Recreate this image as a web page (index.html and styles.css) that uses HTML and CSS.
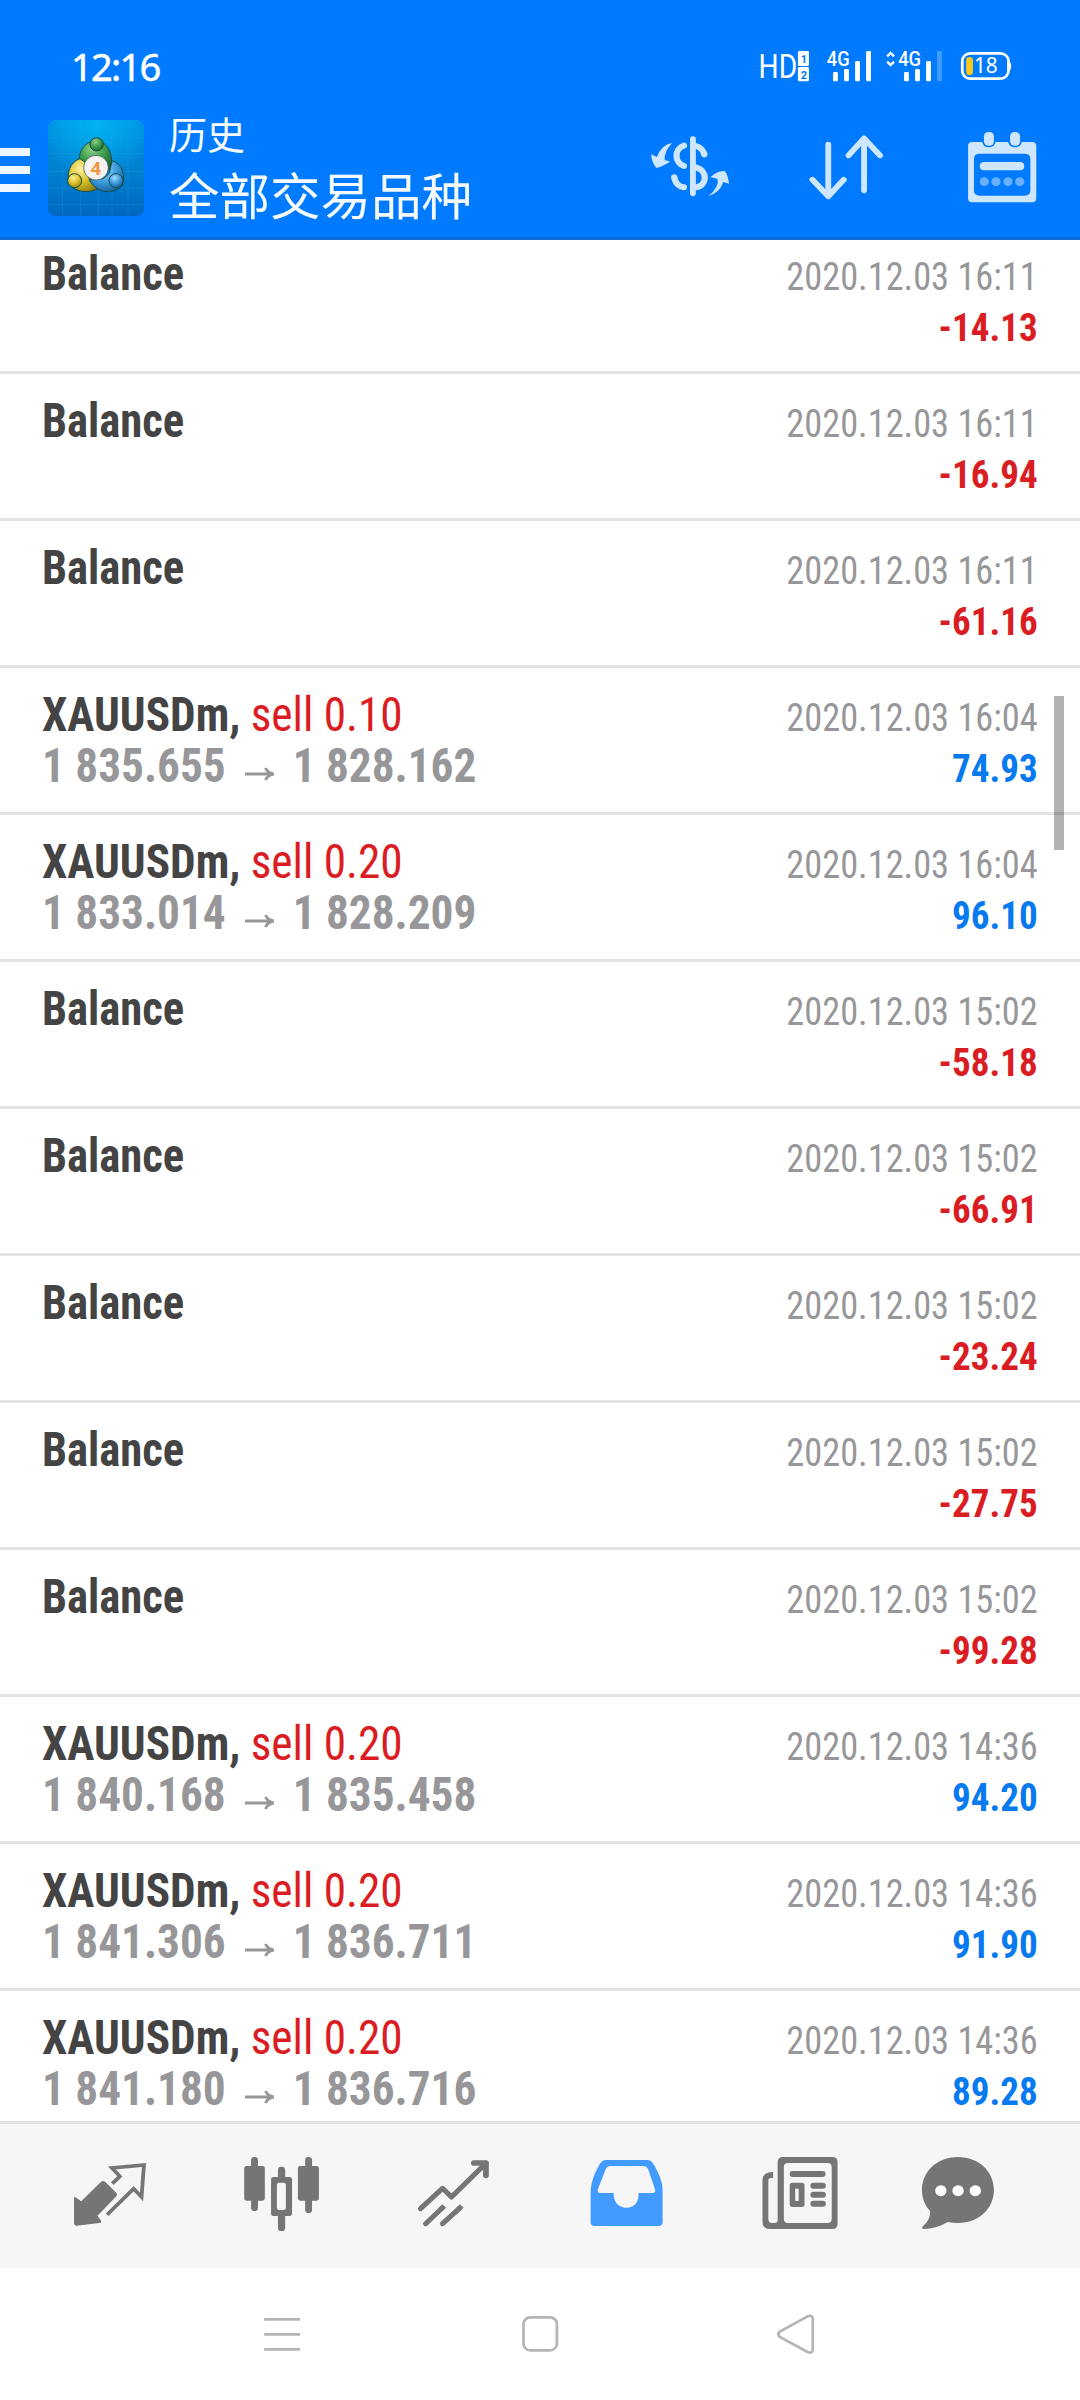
FILE: index.html
```html
<!DOCTYPE html>
<html lang="zh-CN">
<head>
<meta charset="utf-8">
<title>历史</title>
<link rel="stylesheet" href="styles.css">
</head>
<body>
<div class="screen">
  <header class="header">
    <div class="statusbar">
      <span class="clock">12:16</span>
      <svg class="status-icons" preserveAspectRatio="none" viewBox="639 57 740 180">
        <text class="hd" x="635" y="174" textLength="112" lengthAdjust="spacingAndGlyphs">HD</text>
        <rect x="749" y="93" width="32" height="45" rx="4" fill="#fff"/>
        <rect x="749" y="141" width="32" height="43" rx="4" fill="#fff"/>
        <g class="sim"><text x="757" y="128">1</text><text x="757" y="176">2</text></g>
        <g class="net"><text x="833" y="138" textLength="66" lengthAdjust="spacingAndGlyphs">4G</text><text x="1040" y="138" textLength="66" lengthAdjust="spacingAndGlyphs">4G</text></g>
        <g fill="#fff">
          <rect x="851" y="156" width="14" height="28" rx="4"/><rect x="883" y="147" width="14" height="37" rx="4"/><rect x="915" y="123" width="14" height="61" rx="4"/><rect x="947" y="93" width="14" height="91" rx="4"/>
          <rect x="1057" y="156" width="14" height="28" rx="4"/><rect x="1089" y="147" width="14" height="37" rx="4"/><rect x="1121" y="123" width="14" height="61" rx="4"/><rect x="1153" y="93" width="14" height="91" rx="4" opacity=".25"/>
          <path d="M1358 122q10 2 10 16t-10 16z"/>
        </g>
        <path d="M1008 109L1018 99L1028 109M1008 125L1018 135L1028 125" fill="none" stroke="#fff" stroke-width="7"/>
        <rect x="1226" y="100" width="134" height="76" rx="23" fill="none" stroke="#fff" stroke-width="8"/>
        <rect x="1237" y="111" width="20" height="54" rx="10" fill="#f8c81c"/>
        <text class="battery" x="1260" y="159" textLength="69" lengthAdjust="spacingAndGlyphs">18</text>
      </svg>
    </div>
    <div class="appbar">
      <div class="menu"><i></i><i></i><i></i></div>
      <svg class="logo" viewBox="24 30 288 288">
        <defs>
          <linearGradient id="bg" x1="0" y1="0" x2="0" y2="1"><stop offset="0" stop-color="#0090e4"/><stop offset=".5" stop-color="#0082cf"/><stop offset="1" stop-color="#0067c0"/></linearGradient>
          <radialGradient id="glow" cx=".5" cy="0" r=".6"><stop offset="0" stop-color="#00b4f0"/><stop offset="1" stop-color="#00b4f0" stop-opacity="0"/></radialGradient>
          <radialGradient id="g" cx=".4" cy=".3" r=".8"><stop offset="0" stop-color="#8fd08a"/><stop offset=".5" stop-color="#3c9b48"/><stop offset="1" stop-color="#156030"/></radialGradient>
          <radialGradient id="y" cx=".4" cy=".3" r=".8"><stop offset="0" stop-color="#fff0a0"/><stop offset=".5" stop-color="#dcc226"/><stop offset="1" stop-color="#8a7c10"/></radialGradient>
          <radialGradient id="b" cx=".4" cy=".3" r=".8"><stop offset="0" stop-color="#a4dcff"/><stop offset=".5" stop-color="#3b9bdc"/><stop offset="1" stop-color="#10588e"/></radialGradient>
        </defs>
        <rect x="24" y="30" width="288" height="288" rx="22" fill="url(#bg)"/>
        <rect x="24" y="30" width="288" height="288" rx="22" fill="url(#glow)"/>
        <path d="M24 82H312M24 130H312M24 184H312M24 234H312M24 284H312M68 30V318M122 30V318M176 30V318M216 30V318M264 30V318" stroke="#35b5e8" stroke-width="2" opacity=".3"/>
        <g stroke="#174d4a" stroke-width="3">
          <path d="M168 92C136 94 116 120 118 152L148 178L190 170L212 180C222 140 206 94 168 92Z" fill="url(#g)"/>
          <path d="M120 146C90 156 78 190 88 224C110 248 148 250 174 236L148 208L140 160Z" fill="url(#y)"/>
          <path d="M216 152C248 162 258 196 246 228C220 254 170 252 148 210L190 206L208 190Z" fill="url(#b)"/>
          <circle cx="170" cy="103" r="20" fill="url(#g)"/>
          <circle cx="104" cy="212" r="21" fill="url(#y)"/>
          <circle cx="228" cy="212" r="21" fill="url(#b)"/>
          <circle cx="168" cy="173" r="37" fill="#f6f2f2" stroke-width="2"/>
        </g>
        <text class="four" x="168" y="194" text-anchor="middle">4</text>
      </svg>
      <div class="titles"><span class="title">历史</span><span class="subtitle">全部交易品种</span></div>
      <div class="actions">
        <svg preserveAspectRatio="none" viewBox="209 270 453 381">
          <g class="pale">
            <path d="M384 369Q352 374 339 411L323 403Q323 425 337 443Q343 446 378 425L362 420Q360 393 384 369Z"/>
            <path d="M489 528Q522 500 515 476L495 472Q514 452 536 453Q545 462 549 491L532 486Q524 516 489 528Z"/>
          </g>
          <path class="pale-line" d="M444 357V520" stroke-width="17"/>
          <path class="pale-line" d="M418 377C389 386 389 428 418 438M453 378Q472 384 477 403M453 442C487 452 487 496 453 502M390 472Q394 498 418 502" stroke-width="18" stroke-linecap="butt"/>
          <g class="pale"><circle cx="477" cy="402" r="9"/><circle cx="390" cy="474" r="9"/></g>
        </svg>
        <svg preserveAspectRatio="none" viewBox="662 270 453 381"><path class="pale-line" d="M837 374V528M791 479L837 529L882 479M941 511V357M896 406L941 355L987 406" stroke-width="17"/></svg>
        <svg preserveAspectRatio="none" viewBox="1115 270 453 381">
          <path class="pale" fill-rule="evenodd" d="M1255 366H1284Q1288 382 1303 382T1323 366H1359Q1363 382 1379 382T1399 366H1429Q1441 366 1441 378V534Q1441 547 1429 547H1255Q1243 547 1243 534V378Q1243 366 1255 366ZM1277 401Q1260 401 1260 417V511Q1260 527 1277 527H1407Q1424 527 1424 511V417Q1424 401 1407 401Z"/>
          <rect x="1285" y="332" width="37" height="49" rx="17" fill="#007bff"/><rect x="1361" y="332" width="37" height="49" rx="17" fill="#007bff"/>
          <rect class="pale" x="1289" y="336" width="29" height="41" rx="13"/><rect class="pale" x="1365" y="336" width="29" height="41" rx="13"/>
          <rect class="pale" x="1277" y="426" width="129" height="25" rx="12"/>
          <g fill="#66b0ff"><circle cx="1290" cy="485" r="13.500"/><circle cx="1324" cy="485" r="13.500"/><circle cx="1359" cy="485" r="13.500"/><circle cx="1393" cy="485" r="13.500"/></g>
        </svg>
      </div>
    </div>
  </header>
  <main class="list" id="list"></main>
  <nav class="tabs">
    <svg preserveAspectRatio="none" viewBox="69.700 72 499.400 432">
      <path d="M299 243Q303 243 306 246L338 279Q342 284 338 289L283 347L294 363L293 368L223 377Q215 378 215 370V292H219L236 304L293 246Z"/>
      <path fill="none" stroke="#757575" stroke-width="11" d="M326 251L348 229L325 204L418 195L411 291L388 266L311 344"/>
    </svg>
    <svg preserveAspectRatio="none" viewBox="569.100 72 499.400 432">
      <rect x="709" y="198" width="60" height="104" rx="7"/><rect x="729" y="171" width="20" height="162" rx="10"/>
      <rect x="865" y="198" width="61" height="104" rx="7"/><rect x="886" y="171" width="20" height="168" rx="10"/>
      <rect x="807" y="200" width="21" height="193" rx="10"/><rect x="787" y="231" width="61" height="117" rx="7"/><rect x="804" y="248" width="26" height="82" rx="7" fill="#f6f6f6"/>
    </svg>
    <svg preserveAspectRatio="none" viewBox="1068.600 72 499.400 432"><g fill="none" stroke="#757575" stroke-linecap="round" stroke-linejoin="round">
      <path stroke-width="15" d="M1221 326L1285 265L1311 291L1411 190"/><path stroke-width="17" d="M1376 189H1411V226"/>
      <path stroke-width="15" d="M1236 371L1283 325M1285 371L1334 325"/><path stroke-width="15" stroke-linecap="butt" d="M1280 328L1290 318M1330 328L1341 318"/></g></svg>
    <svg preserveAspectRatio="none" viewBox="0 72 499.400 432"><path fill="#429bff" fill-rule="evenodd" d="M190 180H313Q322 180 327 188C347 222 356 246 356 272V365Q356 378 344 378H159Q147 378 147 365V275C148 246 158 218 176 188Q181 180 190 180ZM205 198Q195 198 191 207L168 268Q165 279 175 279H214C213 304 226 323 251 323S288 304 286 279H327Q337 279 334 268L314 208Q309 198 298 198Z"/></svg>
    <svg preserveAspectRatio="none" viewBox="499.400 72 499.400 432">
      <path fill-rule="evenodd" d="M706 171H848Q864 171 864 187V371Q864 387 848 387H668Q646 387 646 365V240Q646 216 677 216V233Q663 233 663 240V358Q663 369 674 369H681Q690 369 690 360V187Q690 171 706 171ZM720 189Q708 189 708 201V357Q708 369 720 369H835Q847 369 847 357V201Q847 189 835 189Z"/>
      <rect x="725" y="213" width="104" height="18" rx="8"/><path fill-rule="evenodd" d="M733 248H760Q768 248 768 256V313Q768 321 760 321H733Q725 321 725 313V256Q725 248 733 248ZM741 266V303H751V266Z"/>
      <rect x="785" y="248" width="45" height="18" rx="9"/><rect x="785" y="275" width="45" height="18" rx="9"/><rect x="785" y="302" width="45" height="18" rx="9"/>
    </svg>
    <svg preserveAspectRatio="none" viewBox="998.900 72 499.400 432">
      <path d="M1213 171C1276 171 1318 216 1318 270S1276 369 1213 369Q1196 369 1184 366Q1151 387 1113 387Q1107 384 1112 379Q1133 361 1133 334Q1109 307 1109 270C1109 216 1152 171 1213 171Z"/>
      <g fill="#fff"><circle cx="1164" cy="272" r="16.500"/><circle cx="1214" cy="272" r="16.500"/><circle cx="1264" cy="272" r="16.500"/></g>
    </svg>
  </nav>
  <footer class="sysnav">
    <svg preserveAspectRatio="none" viewBox="444.300 504 749 396"><path d="M767 658H871M767 703H871M767 748H871"/></svg>
    <svg preserveAspectRatio="none" viewBox="1193.400 504 749 396"><rect x="1520" y="652" width="97" height="99" rx="20"/></svg>
    <svg preserveAspectRatio="none" viewBox="374.600 504 749 396"><path d="M696 695L777 649Q792 643 792 658V748Q792 762 777 756L696 711Q688 703 696 695Z"/></svg>
  </footer>
  <div class="scrollbar"></div>
</div>
<script src="list.js"></script>
</body>
</html>
```
FILE: list.js
```js
const rows = [
  ["16:11", "-14.13"],
  ["16:11", "-16.94"],
  ["16:11", "-61.16"],
  ["16:04", "74.93", "0.10", "1 835.655", "1 828.162"],
  ["16:04", "96.10", "0.20", "1 833.014", "1 828.209"],
  ["15:02", "-58.18"],
  ["15:02", "-66.91"],
  ["15:02", "-23.24"],
  ["15:02", "-27.75"],
  ["15:02", "-99.28"],
  ["14:36", "94.20", "0.20", "1 840.168", "1 835.458"],
  ["14:36", "91.90", "0.20", "1 841.306", "1 836.711"],
  ["14:36", "89.28", "0.20", "1 841.180", "1 836.716"],
];
const arrow = '<svg class="arrow" viewBox="0 0 96 42"><path d="M0 21H90M66 3Q72 17 92 21Q72 25 66 39"/></svg>';
document.getElementById("list").innerHTML = rows.map(([time, amount, lots, open, close]) => `
  <article class="row">
    <div class="deal">
      ${lots
        ? `<div class="name">XAUUSDm, <span class="sell">sell ${lots}</span></div>
      <div class="prices"><span>${open}</span>${arrow}<span>${close}</span></div>`
        : `<div class="name balance">Balance</div>`}
    </div>
    <div class="result">
      <div class="date">2020.12.03 ${time}</div>
      <div class="amount ${amount[0] === "-" ? "loss" : "profit"}">${amount}</div>
    </div>
  </article>`).join("");
```
FILE: styles.css
```css
* { box-sizing: border-box; }
body { margin: 0; background: #fff; }
svg { display: block; }
.screen {
  position: relative;
  width: 1080px;
  height: 2400px;
  display: flex;
  flex-direction: column;
  overflow: hidden;
  font-family: Roboto, sans-serif;
  font-stretch: 75%;
}
.header { height: 240px; flex: none; background: #007bff; border-bottom: 3px solid #0a6cd6; }
.statusbar { height: 110px; padding: 39px 65px 0 71px; display: flex; justify-content: space-between; }
.clock { font: 400 38px/54px "Noto Sans", sans-serif; letter-spacing: -1.700px; color: #fff; -webkit-text-stroke: .5px #fff; }
.status-icons { width: 255px; height: 60px; flex: none; }
.hd { font: 400 101px Roboto, sans-serif; fill: #fff; }
.sim { font: 700 32px "Roboto", sans-serif; fill: #007bff; }
.net { font: 500 60px "Roboto", sans-serif; fill: #fff; }
.battery { font: 400 64px "Noto Sans", sans-serif; fill: #fff; }
.appbar { height: 127px; display: flex; }
.menu { width: 30px; padding-top: 38px; display: flex; flex-direction: column; gap: 10px; }
.menu i { height: 8px; background: #eef6ff; }
.logo { width: 96px; height: 96px; margin: 10px 0 0 18px; }
.four { font: 700 54px "Open Sans", sans-serif; fill: #f2953c; }
.titles { width: 330px; margin-left: 25px; display: flex; flex-direction: column; color: #f4faff; font-family: "Noto Sans CJK SC", sans-serif; }
.title { font-size: 38px; line-height: 56px; margin-top: -5px; }
.subtitle { font-size: 50.500px; line-height: 65px; white-space: nowrap; }
.actions { margin-left: auto; display: flex; }
.actions svg { width: 156px; height: 127px; }
.pale { fill: #cfe6ff; }
.pale-line { fill: none; stroke: #cfe6ff; stroke-linecap: round; stroke-linejoin: round; }
.list { height: 1881px; flex: none; overflow: hidden; }
.row { height: 147px; border-bottom: 3px solid #e3e3e3; padding: 0 42px; display: flex; justify-content: space-between; }
.row:first-child { margin-top: -13px; }
.deal { padding-top: 21px; font-weight: 700; font-size: 48px; line-height: 51px; white-space: nowrap; }
.name { color: #444; transform: scaleX(.943); transform-origin: left; }
.balance { transform: scaleX(.93); }
.sell { font-weight: 400; color: #da1d22; }
.prices { display: flex; color: #97979a; transform: scaleX(.943); transform-origin: left; }
.arrow { width: 32px; height: 14px; margin: 26.500px 19px 0 20px; fill: none; stroke: #97979a; stroke-width: 9px; }
.result { padding-top: 25px; text-align: right; font-size: 39px; line-height: 51px; }
.date { color: #97979a; transform: scaleX(.932); transform-origin: right; }
.amount { font-weight: 700; transform: scaleX(.95); transform-origin: right; }
.loss { color: #da1d22; }
.profit { color: #087af0; }
.tabs { height: 147px; flex: none; border-top: 3px solid #e1e1e1; background: #f6f6f6; padding: 0 24px; display: flex; fill: #757575; }
.tabs svg { width: 172px; height: 144px; }
.sysnav { height: 132px; padding: 0 153px; display: flex; }
.sysnav svg { width: 258px; height: 132px; fill: none; stroke: #b5b5b5; stroke-width: 8px; }
.scrollbar { position: absolute; left: 1054px; top: 696px; width: 10px; height: 154px; background: rgba(0, 0, 0, .3); }
```
